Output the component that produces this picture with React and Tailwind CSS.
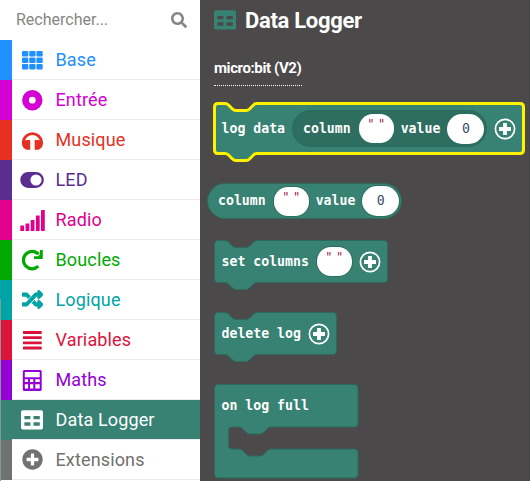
import React from "react";
import { FaSearch, FaPlusCircle, FaRandom } from "react-icons/fa";

const Svg = ({ children, w = 24, h = 24 }) => (
  <svg width={w} height={h} viewBox={`0 0 ${w} ${h}`} fill="currentColor" className="block shrink-0">
    {children}
  </svg>
);

const GridIcon = () => (
  <Svg>
    {[3, 9.6, 16].map((y) =>
      [2, 9.2, 16.4].map((x) => <rect key={`${x}-${y}`} x={x} y={y} width="6.3" height="5.4" rx="1" />)
    )}
  </Svg>
);
const DiscIcon = () => (
  <Svg>
    <path fillRule="evenodd" d="M12.3 2a10.2 10.2 0 1 1 0 20.4a10.2 10.2 0 1 1 0-20.4zM12.3 8.8a3.4 3.4 0 1 0 0 6.8a3.4 3.4 0 1 0 0-6.8z" />
  </Svg>
);
const HeadphonesIcon = () => (
  <Svg>
    <path d="M3.300 16v-2.500a9.200 9.200 0 0 1 18.200 0V16" fill="none" stroke="currentColor" strokeWidth="2.700" />
    <path d="M10.200 12v9.700H6.500C4 21 2 18.500 2 15.500q0-1.700 1-2.500 1.500-1 4-1z" />
    <path d="M14.700 12v9.700h3.700c2.500-.7 4.500-3.200 4.500-6.200q0-1.700-1-2.500-1.500-1-4-1z" />
  </Svg>
);
const ToggleIcon = () => (
  <Svg>
    <path fillRule="evenodd" d="M8.200 4h7.700a7.900 7.900 0 0 1 0 15.900H8.200A7.900 7.900 0 0 1 8.200 4zM16 6.400a5.600 5.600 0 1 0 0 11.200a5.600 5.600 0 1 0 0-11.200z" />
  </Svg>
);
const SignalIcon = () => (
  <Svg w={25}>
    <rect x="0.300" y="17.500" width="3.800" height="5.500" rx=".6" />
    <rect x="5.500" y="15.500" width="3.800" height="7.500" rx=".6" />
    <rect x="10.700" y="12" width="3.800" height="11" rx=".6" />
    <rect x="15.900" y="7.500" width="3.800" height="15.500" rx=".6" />
    <rect x="21" y="2" width="3.800" height="21" rx=".6" />
  </Svg>
);
const RepeatIcon = () => (
  <Svg>
    <path d="M18.300 18.200A8.700 8.700 0 1 1 18.600 6.300" fill="none" stroke="currentColor" strokeWidth="3.200" />
    <path d="M22.800 2v8.200q0 .8-.8.800h-8V8.200h4.200L20 6V2z" />
  </Svg>
);
const LinesIcon = () => (
  <Svg>
    {[3, 8.200, 13.400, 18.600].map((y) => <rect key={y} x="3" y={y} width="18.700" height="2.900" rx=".3" />)}
  </Svg>
);
const CalcIcon = () => (
  <Svg>
    <path fillRule="evenodd" d="M4.300 2h15.900q1.500 0 1.500 1.500v17.900q0 1.500-1.500 1.500H4.300q-1.500 0-1.500-1.500V3.500q0-1.500 1.500-1.500zM4.800 4v5.200h14.900V4zM4.800 11.200v2.900h3.300v-2.900zM10 11.200v2.900h3.300v-2.900zM15.300 11.200v2.900h4.400v-2.900zM4.800 16.300v4.200h3.300v-4.200zM10 16.300v4.200h3.300v-4.200zM15.300 16.300v4.200h4.400v-4.200z" />
  </Svg>
);
const TableIcon = () => (
  <Svg w={22} h={20}>
    <path fillRule="evenodd" d="M1.800.3h18.500q1.700 0 1.700 1.700v15.800q0 1.700-1.700 1.700H1.700Q0 19.500 0 17.800V2Q0 .3 1.800.3zM3.400 6v3.300h6V6zM12.500 6v3.300h6.300V6zM3.400 12.200v3.500h6v-3.500zM12.500 12.200v3.500h6.300v-3.500z" />
  </Svg>
);

const categories = [
  { name: "Base", text: "text-[#1e90ff]", bar: "bg-[#1e90ff]", icon: <GridIcon /> },
  { name: "Entrée", text: "text-[#d400d4]", bar: "bg-[#d400d4]", icon: <DiscIcon /> },
  { name: "Musique", text: "text-[#e63022]", bar: "bg-[#e63022]", icon: <HeadphonesIcon /> },
  { name: "LED", text: "text-[#5c2d91]", bar: "bg-[#5c2d91]", icon: <ToggleIcon /> },
  { name: "Radio", text: "text-[#e3008c]", bar: "bg-[#e3008c]", icon: <SignalIcon /> },
  { name: "Boucles", text: "text-[#00aa00]", bar: "bg-[#00aa00]", icon: <RepeatIcon /> },
  { name: "Logique", text: "text-[#00a4a6]", bar: "bg-[#00a4a6]", icon: <FaRandom size={21} stroke="currentColor" strokeWidth="22" /> },
  { name: "Variables", text: "text-[#dc143c]", bar: "bg-[#dc143c]", icon: <LinesIcon /> },
  { name: "Maths", text: "text-[#9400d3]", bar: "bg-[#9400d3]", icon: <CalcIcon /> },
  { name: "Data Logger", text: "text-white", bar: "bg-[#378273]", icon: <TableIcon />, active: true },
  { name: "Extensions", text: "text-[#717171]", bar: "bg-[#717171]", icon: <FaPlusCircle size={21} /> },
];

function Category({ name, text, bar, icon, active }) {
  return (
    <div className={`flex h-10 ${text} ${active ? "bg-[#378273]" : "bg-white"}`}>
      <div className={`w-3 shrink-0 ${bar}`} />
      <div className="flex grow items-center border-b border-[#ebebeb]">
        <span className="ml-2 flex h-6 w-6 items-center justify-center">{icon}</span>
        <span className="ml-[11.5px] text-[18px] leading-6 tracking-[0.14px]">{name}</span>
      </div>
    </div>
  );
}

const Plus = () => (
  <Svg w={22} h={22}>
    <circle cx="11" cy="11" r="9.600" fill="none" stroke="white" strokeWidth="1.700" />
    <path d="M11 5v12M5 11h12" stroke="white" strokeWidth="3.800" />
  </Svg>
);
const Quote = () => (
  <span className="flex h-[29px] w-[35px] shrink-0 justify-center rounded-[14px] bg-white text-[12px] leading-[16px] font-normal text-[#a3214a] shadow-[0_0_0_1px_#2e6e61]">
    <span className="flex w-[18px] shrink-0 justify-between pt-[2px]">
      <span>"</span>
      <span>"</span>
    </span>
  </span>
);
const Zero = () => (
  <span className="flex h-[30px] w-[37px] shrink-0 items-center justify-center rounded-[15px] bg-white font-normal text-[#394a62] shadow-[0_0_0_1px_#2e6e61]">0</span>
);

function Block({ w, h, d, selected, className = "", children }) {
  return (
    <div className={`relative flex items-center ${className}`}>
      <svg width={w} height={h} viewBox={`0 0 ${w} ${h}`} className="absolute top-0 left-0 overflow-visible">
        <path d={d} fill="#378273" stroke={selected ? "#fff200" : "#2b6a5d"} strokeWidth={selected ? 3 : 1} strokeLinejoin="round" />
      </svg>
      {children}
    </div>
  );
}

const stack = (w, h) =>
  `M.5 4q0-3.500 3.500-3.500h7q2 0 3.500 1.500l4 4q1.500 1.500 3.500 1.500h10q2 0 3.500-1.500l4-4q1.500-1.500 3.500-1.500H${w - 4}q3.500 0 3.500 3.500V${h - 4}q0 3.500-3.500 3.500H43q-2 0-3.500 1.500l-4 4q-1.500 1.500-3.500 1.500H22q-2 0-3.500-1.500l-4-4q-1.500-1.500-3.500-1.500H4q-3.500 0-3.500-3.500z`;

export default function App() {
  return (
    <div className="flex h-[481px] w-[530px] overflow-hidden bg-[#4b4949] font-['Roboto',sans-serif]">
      <aside className="relative w-[200px] shrink-0 bg-white">
        <div className="flex h-10 items-center justify-between pr-[13px] pl-4 text-[16px] text-[#858585]">
          <span>Rechercher...</span>
          <FaSearch size={16} />
        </div>
        {categories.map((c) => <Category key={c.name} {...c} />)}
        <div className="absolute top-[299px] bottom-0 left-0 w-px bg-[#7f9a98]" />
      </aside>
      <main className="flex grow flex-col items-start pl-[14px]">
        <h1 className="flex h-10 items-center text-[22px] font-bold tracking-[-0.3px] text-white">
          <span className="mr-[9px] text-[#378273]"><TableIcon /></span>
          Data Logger
        </h1>
        <h2 className="mt-[16px] h-[30px] w-[88px] border-b border-dotted border-white text-[15px] leading-[25px] font-bold tracking-[-0.4px] whitespace-nowrap text-white">micro:bit (V2)</h2>
        <div className="flex flex-col items-start pt-[17px] font-['DejaVu_Sans_Mono',monospace] text-[13.200px] leading-4 font-bold whitespace-pre text-white">
          <Block w={310} h={51} d={stack(310, 51)} selected className="h-[51px] w-[310px] pl-[7.5px]">
            <span className="relative">log data</span>
            <div className="relative ml-[6.5px] flex h-[37px] w-[195px] items-center rounded-full border border-[#2b6a5d] bg-[#2e6e61] pl-[10.5px]">
              <span className="mr-2">column</span><Quote /><span className="mx-[7px]">value</span><Zero />
            </div>
            <span className="relative ml-[7px]"><Plus /></span>
          </Block>
          <div className="mt-[29px] -ml-[7px] flex h-[36px] w-[195px] items-center rounded-full border border-[#2b6a5d] bg-[#378273] pl-[10px]">
            <span className="mr-2">column</span><Quote /><span className="mx-[7px]">value</span><Zero />
          </div>
          <Block w={174} h={43} d={stack(174, 43)} className="mt-[21px] h-[43px] w-[174px] pl-[7.5px]">
            <span className="relative mr-2">set columns</span><span className="relative"><Quote /></span><span className="relative ml-[7px]"><Plus /></span>
          </Block>
          <Block w={123} h={43} d={stack(123, 43)} className="mt-[29px] h-[43px] w-[123px] pl-[7.5px]">
            <span className="relative mr-[7px]">delete log</span><span className="relative"><Plus /></span>
          </Block>
          <Block
            w={145}
            h={94}
            d="M.5 4q0-3.500 3.500-3.500h136.500q3.500 0 3.500 3.500v35.500q0 3.500-3.500 3.500H57q-2 0-3.500 1.500l-4 4q-1.500 1.500-3.500 1.500H36q-2 0-3.500-1.500l-4-4q-1.500-1.500-3.500-1.500h-7q-3.500 0-3.500 3.500v15q0 3.500 3.500 3.500h7q2 0 3.500 1.500l4 4q1.500 1.500 3.500 1.500h10q2 0 3.500-1.500l4-4q1.500-1.500 3.500-1.500h83.500q3.500 0 3.500 3.500v22q0 3.500-3.500 3.500H4q-3.500 0-3.500-3.500z"
            className="mt-[29px] h-[43px] w-[145px] pl-[7.5px]"
          >
            <span className="relative">on log full</span>
          </Block>
        </div>
      </main>
    </div>
  );
}
